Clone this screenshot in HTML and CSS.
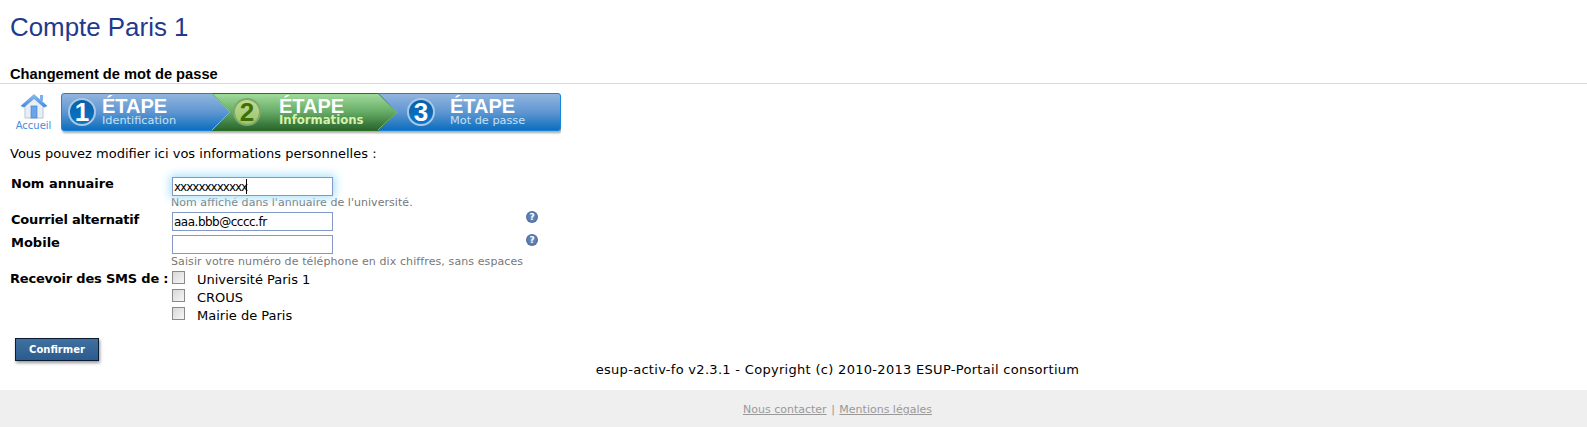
FILE: index.html
```html
<!DOCTYPE html>
<html lang="fr">
<head>
    <meta charset="UTF-8">
    <title>Compte Paris 1</title>
    <link rel="stylesheet" href="styles.css">
</head>
<body>

    <h1 class="site-title">Compte Paris 1</h1>
    <h2 class="page-title">Changement de mot de passe</h2>

    <div class="step-row">
        <a href="#" class="home-link">
            <svg width="28" height="26" viewBox="0 0 28 26">
                <defs>
                    <linearGradient id="roofGrad" x1="0" y1="0" x2="0" y2="1">
                        <stop offset="0" stop-color="#8fbcef"/>
                        <stop offset="1" stop-color="#3f8bdf"/>
                    </linearGradient>
                </defs>
                <path d="M5 12 L5 25 L23 25 L23 12 L14 5 Z" fill="#e9eef5" stroke="#b9c6d6"/>
                <rect x="11" y="13" width="6" height="12" fill="#6aa5e8" stroke="#3a7cc8" stroke-width="0.6"/>
                <path d="M0.5 13 L14 1 L27.5 13 L24 14.5 L14 6 L4 14.5 Z" fill="url(#roofGrad)"/>
                <rect x="20" y="2" width="3" height="6" fill="#7fb0e8"/>
            </svg>
            <span>Accueil</span>
        </a>

        <div class="steps">
            <svg class="steps-bg" width="500" height="42" viewBox="0 0 500 42">
                <defs>
                    <linearGradient id="blueGrad" x1="0" y1="0" x2="0" y2="1">
                        <stop offset="0" stop-color="#93b5de"/>
                        <stop offset="0.5" stop-color="#5f97d2"/>
                        <stop offset="1" stop-color="#0b6dbd"/>
                    </linearGradient>
                    <linearGradient id="greenGrad" x1="0" y1="0" x2="0" y2="1">
                        <stop offset="0" stop-color="#a2dc9c"/>
                        <stop offset="0.5" stop-color="#66ab66"/>
                        <stop offset="1" stop-color="#26632a"/>
                    </linearGradient>
                    <filter id="barShadow" x="-2%" y="-10%" width="104%" height="130%">
                        <feDropShadow dx="1" dy="2" stdDeviation="1.2" flood-color="#000" flood-opacity="0.35"/>
                    </filter>
                </defs>
                <g filter="url(#barShadow)">
                    <path d="M300 0.5 H497 Q499.5 0.5 499.5 3 V35 Q499.5 37.5 497 37.5 H300 Z" fill="url(#blueGrad)" stroke="#1586dd"/>
                    <path d="M130 0.5 H317 L336 19 L317 37.5 H130 Z" fill="url(#greenGrad)" stroke="#2b6f22"/>
                    <path d="M3 0.5 H151 L169 19 L151 37.5 H3 Q0.5 37.5 0.5 35 V3 Q0.5 0.5 3 0.5 Z" fill="url(#blueGrad)" stroke="#1586dd"/>
                </g>
                <path d="M151 1 L169 19 L151 37" fill="none" stroke="#7fc0a8" stroke-width="1"/>
                <path d="M317 1 L336 19 L317 37" fill="none" stroke="#7fb97f" stroke-width="1"/>
            </svg>
            <div class="step step-one">
                <span class="step-num">1</span>
                <div class="step-text"><strong>ÉTAPE</strong><span>Identification</span></div>
            </div>
            <div class="step step-two active">
                <span class="step-num">2</span>
                <div class="step-text"><strong>ÉTAPE</strong><span>Informations</span></div>
            </div>
            <div class="step step-three">
                <span class="step-num">3</span>
                <div class="step-text"><strong>ÉTAPE</strong><span>Mot de passe</span></div>
            </div>
        </div>
    </div>

    <p class="intro">Vous pouvez modifier ici vos informations personnelles :</p>

    <form class="info-form">
        <div class="form-row row-name">
            <label>Nom annuaire</label>
            <div class="field">
                <div class="input-wrap">
                    <input type="text" class="focused" value="xxxxxxxxxxxx">
                    <span class="caret"></span>
                </div>
                <div class="hint">Nom affiché dans l'annuaire de l'université.</div>
            </div>
        </div>
        <div class="form-row row-mail">
            <label>Courriel alternatif</label>
            <div class="field">
                <input type="text" value="aaa.bbb@cccc.fr">
            </div>
            <span class="help">?</span>
        </div>
        <div class="form-row row-mobile">
            <label>Mobile</label>
            <div class="field">
                <input type="text" value="">
                <div class="hint">Saisir votre numéro de téléphone en dix chiffres, sans espaces</div>
            </div>
            <span class="help">?</span>
        </div>
        <div class="form-row row-sms">
            <label>Recevoir des SMS de :</label>
            <div class="field">
                <div class="check"><input type="checkbox"><span>Université Paris 1</span></div>
                <div class="check"><input type="checkbox"><span>CROUS</span></div>
                <div class="check"><input type="checkbox"><span>Mairie de Paris</span></div>
            </div>
        </div>
        <button type="button" class="submit-btn">Confirmer</button>
    </form>

    <div class="copyright">esup-activ-fo v2.3.1 - Copyright (c) 2010-2013 ESUP-Portail consortium</div>

    <div class="footer">
        <a href="#">Nous contacter</a> <span class="sep">|</span> <a href="#">Mentions légales</a>
    </div>

</body>
</html>
```

FILE: styles.css
```css
html, body {
    margin: 0;
    padding: 0;
}
body {
    font-family: "DejaVu Sans", Verdana, sans-serif;
    font-size: 13px;
    color: #111;
    background-color: #fff;
    height: 427px;
    overflow: hidden;
    display: flex;
    flex-direction: column;
}

.site-title {
    font-family: "Liberation Sans", Arial, sans-serif;
    font-size: 25.9px;
    font-weight: normal;
    line-height: 30px;
    color: #1f3a8c;
    margin: 0;
    padding: 12px 0 0 10px;
}
.page-title {
    font-family: "Liberation Sans", Arial, sans-serif;
    font-size: 14.67px;
    font-weight: bold;
    line-height: 16px;
    color: #000;
    margin: 0;
    padding: 24px 0 1px 10px;
    border-bottom: 1px solid #d9d9d9;
}

.step-row {
    display: flex;
    margin-top: 9px;
    height: 42px;
    flex-shrink: 0;
}
.home-link {
    width: 47px;
    margin-left: 10px;
    margin-right: 4px;
    display: flex;
    flex-direction: column;
    align-items: center;
    color: #4a8ad8;
    font-size: 10px;
    text-decoration: none;
}
.home-link span {
    line-height: 12px;
    margin-top: 1px;
}

.steps {
    position: relative;
    width: 500px;
    display: flex;
}
.steps-bg {
    position: absolute;
    left: 0;
    top: 0;
}
.step {
    position: relative;
    display: flex;
    color: #fff;
}
.step-one {
    width: 165px;
    padding-left: 7px;
}
.step-two {
    width: 174px;
}
.step-num {
    box-sizing: border-box;
    width: 28px;
    height: 28px;
    margin-top: 5px;
    border: 2px solid #a9c8e6;
    border-radius: 50%;
    background: linear-gradient(#0b5fa8, #0a76c9);
    font-family: "Liberation Sans", Arial, sans-serif;
    font-size: 26px;
    font-weight: bold;
    line-height: 24px;
    text-align: center;
}
.step-one .step-text {
    margin-left: 6px;
}
.step-two .step-num {
    background: linear-gradient(#bcdc92, #9cc56c);
    border-color: #7fa86a;
    color: #3f6f06;
}
.step-two .step-text {
    margin-left: 18px;
}
.step-three .step-text {
    margin-left: 15px;
}
.step-text {
    display: flex;
    flex-direction: column;
    padding-top: 4px;
}
.step-text strong {
    font-family: "Liberation Sans", Arial, sans-serif;
    font-size: 20px;
    line-height: 19px;
}
.step-text span {
    font-size: 11.3px;
    line-height: 9px;
    color: #c4e2f7;
}
.step-two .step-text span {
    font-size: 11.7px;
    color: #d6f2a8;
    font-weight: bold;
}

.intro {
    font-size: 13px;
    line-height: 16px;
    margin: 11px 0 0 10px;
    color: #000;
    flex-shrink: 0;
}

.info-form {
    margin: 15px 0 0 0;
}
.form-row {
    display: flex;
}
.form-row label {
    width: 161px;
    margin-left: 11px;
    font-weight: bold;
    font-size: 13px;
    color: #000;
    line-height: 16px;
    white-space: nowrap;
}
.row-name label {
    margin-top: -1px;
}
.row-mail label {
    letter-spacing: -0.2px;
}
.row-sms label {
    margin-left: 10px;
    width: 162px;
    letter-spacing: -0.2px;
}
.field {
    width: 354px;
}
.field input[type="text"] {
    display: block;
    box-sizing: border-box;
    width: 161px;
    height: 19px;
    padding: 0 1px;
    border: 1px solid #8299c6;
    font-family: "DejaVu Sans", Verdana, sans-serif;
    font-size: 12px;
    letter-spacing: -0.5px;
    color: #000;
    outline: none;
}
.field input.focused {
    box-shadow: 0 0 10px 2px #a5e0fa;
    letter-spacing: -1px;
}
.input-wrap {
    position: relative;
}
.caret {
    position: absolute;
    left: 74px;
    top: 2px;
    width: 1px;
    height: 15px;
    background: #000;
}
.hint {
    font-size: 11px;
    letter-spacing: 0.1px;
    line-height: 13px;
    color: #777;
    margin-left: -1px;
}
.row-name .hint {
    letter-spacing: 0.05px;
}
.row-mail {
    margin-top: 3px;
}
.row-mobile {
    margin-top: 4px;
}
.row-mobile .hint {
    margin-top: 1px;
}
.row-sms {
    margin-top: 3px;
}
.help {
    width: 12px;
    height: 12px;
    margin-top: -1px;
    border-radius: 50%;
    background: radial-gradient(#7093c0, #3f6497);
    color: #fff;
    font-size: 9px;
    font-weight: bold;
    line-height: 12px;
    text-align: center;
}

.check {
    display: flex;
    height: 18px;
    font-size: 13px;
    line-height: 18px;
    color: #000;
}
.check input {
    appearance: none;
    box-sizing: border-box;
    width: 13px;
    height: 13px;
    margin: 0 12px 0 0;
    border: 1px solid #8a8a8a;
    background: linear-gradient(135deg, #d8d8d8, #f6f6f6);
}

.submit-btn {
    display: block;
    margin: 13px 0 0 15px;
    width: 84px;
    height: 23px;
    border: 1px solid #0c1c33;
    background: linear-gradient(#3f709f, #2c5c8e);
    box-shadow: 1px 2px 3px rgba(0, 0, 0, 0.4);
    color: #fff;
    font-family: "DejaVu Sans", Verdana, sans-serif;
    font-size: 10px;
    font-weight: bold;
    padding: 0;
}

.copyright {
    padding-left: 88px;
    text-align: center;
    color: #000;
    letter-spacing: 0.3px;
    line-height: 16px;
    margin-top: 1px;
}
.footer {
    margin-top: auto;
    height: 37px;
    flex-shrink: 0;
    padding-left: 88px;
    background: #efefef;
    text-align: center;
    font-size: 11px;
    line-height: 39px;
    color: #999;
}
.footer a {
    color: #999;
}
.sep {
    margin: 0 1px;
}
```
